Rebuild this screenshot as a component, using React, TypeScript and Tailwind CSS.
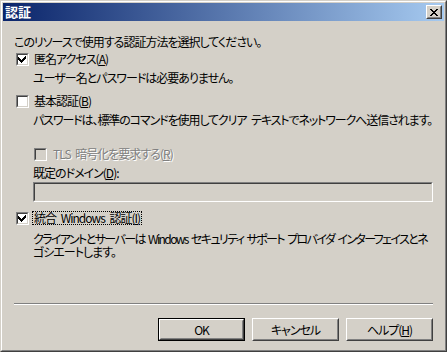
import React from "react";

const F = "font-['Noto_Sans_CJK_JP',sans-serif] [font-feature-settings:'palt'] text-[12px] text-black tracking-[-1px] [word-spacing:3px]";

function Check({ checked = false, disabled = false }: { checked?: boolean; disabled?: boolean }) {
  return (
    <span className="block w-[13px] h-[13px] shrink-0 border border-t-[#808080] border-l-[#808080] border-b-white border-r-white">
      <span
        className={
          disabled
            ? "block w-[11px] h-[11px] border border-t-[#404040] border-l-[#404040] border-b-[#d4d0c8] border-r-[#d4d0c8] bg-[#d4d0c8]"
            : "block w-[11px] h-[11px] border border-t-[#404040] border-l-[#404040] border-b-[#d4d0c8] border-r-[#d4d0c8] bg-white"
        }
      >
        {checked && (
          <svg width="9" height="9" viewBox="0 0 9 9" shapeRendering="crispEdges" className="block">
            <path
              d="M7 1h1v3h-1v1h-1v1h-1v1h-1v1h-1v-1h-1v-1h-1v-1h-1v-3h1v1h1v1h1v1h1v-1h1v-1h1z"
              fill="#000"
            />
          </svg>
        )}
      </span>
    </span>
  );
}

function Btn({ children, def = false }: { children: React.ReactNode; def?: boolean }) {
  const inner = (
    <div className="flex-1 flex border border-t-white border-l-white border-b-[#404040] border-r-[#404040]">
      <div className="flex-1 flex items-center justify-center border border-t-[#d4d0c8] border-l-[#d4d0c8] border-b-[#808080] border-r-[#808080] leading-[14px]">
        {children}
      </div>
    </div>
  );
  return def ? (
    <div className="w-[87px] h-[23px] flex border border-black">{inner}</div>
  ) : (
    <div className="w-[87px] h-[23px] flex">{inner}</div>
  );
}

export default function App() {
  return (
    <div className={`${F} w-[447px] h-[352px] overflow-hidden bg-[#d4d0c8] flex border border-t-[#d4d0c8] border-l-[#d4d0c8] border-b-[#404040] border-r-[#404040]`}>
      <div className="flex-1 min-w-0 flex flex-col border border-t-white border-l-white border-b-[#808080] border-r-[#808080] p-[1px]">
        {/* title bar */}
        <div className="h-[18px] flex items-center justify-between bg-[linear-gradient(to_right,#0a246a,#a6caf0)] pl-[2px] pr-[2px]">
          <span className="text-white font-bold text-[13px] leading-[14px] tracking-[0px]">認証</span>
          <div className="w-[16px] h-[14px] flex border border-t-white border-l-white border-b-[#404040] border-r-[#404040] bg-[#d4d0c8]">
            <div className="flex-1 flex items-center justify-center border border-t-[#d4d0c8] border-l-[#d4d0c8] border-b-[#808080] border-r-[#808080]">
              <svg width="8" height="7" viewBox="0 0 8 7" shapeRendering="crispEdges">
                <path
                  d="M0 0h2v1h1v1h2v-1h1v-1h2v1h-1v1h-1v1h-1v1h1v1h1v1h1v1h-2v-1h-1v-1h-2v1h-1v1h-2v-1h1v-1h1v-1h1v-1h-1v-1h-1v-1h-1z"
                  fill="#000"
                />
              </svg>
            </div>
          </div>
        </div>

        {/* content */}
        <div className="flex-1 min-w-0 flex flex-col pl-[11px] pr-[11px] pt-[14px]">
          <div className="leading-[14px] h-[14px] whitespace-nowrap">
            このリソースで使用する認証方法を選択してください。
          </div>

          <div className="mt-[3px] h-[14px] flex items-center pl-[2px] gap-[5px]">
            <Check checked />
            <span className="leading-[14px] whitespace-nowrap">
              匿名アクセス(<span className="underline">A</span>)
            </span>
          </div>
          <div className="mt-[5px] h-[14px] leading-[14px] pl-[19px] whitespace-nowrap">
            ユーザー名とパスワードは必要ありません。
          </div>

          <div className="mt-[9px] h-[14px] flex items-center pl-[2px] gap-[5px]">
            <Check />
            <span className="leading-[14px] whitespace-nowrap">
              基本認証(<span className="underline">B</span>)
            </span>
          </div>
          <div className="mt-[5px] h-[14px] leading-[14px] pl-[19px] whitespace-nowrap tracking-[-1.1px]">
            パスワードは、標準のコマンドを使用してクリア テキストでネットワークへ送信されます。
          </div>

          <div className="mt-[20px] h-[14px] flex items-center pl-[20px] gap-[6px]">
            <Check disabled />
            <span className="leading-[14px] whitespace-nowrap text-[#808080] [text-shadow:1px_1px_0_#ffffff]">
              TLS 暗号化を要求する(<span className="underline">R</span>)
            </span>
          </div>
          <div className="mt-[5px] h-[14px] leading-[14px] pl-[19px] whitespace-nowrap">
            既定のドメイン(<span className="underline">D</span>):
          </div>
          <div className="mt-[2px] ml-[19px] h-[20px] flex border border-t-[#808080] border-l-[#808080] border-b-white border-r-white">
            <div className="flex-1 border border-t-[#404040] border-l-[#404040] border-b-[#d4d0c8] border-r-[#d4d0c8] bg-[#d4d0c8]" />
          </div>

          <div className="mt-[9px] h-[14px] flex items-center pl-[2px] gap-[3px]">
            <Check checked />
            <span className="leading-[12px] whitespace-nowrap border border-dotted border-black px-[1px]">
              統合 Windows 認証(<span className="underline">I</span>)
            </span>
          </div>
          <div className="mt-[7px] leading-[13px] pl-[19px] whitespace-nowrap">
            <div className="tracking-[-1.6px] [word-spacing:2px]">
              クライアントとサーバーは Windows セキュリティ サポート プロバイダ インターフェイスとネ
            </div>
            <div>ゴシエートします。</div>
          </div>

          <div className="mt-[45px] h-[2px] border-t border-t-[#808080] border-b border-b-white" />

          <div className="mt-[13px] flex justify-end gap-[7px]">
            <Btn def>OK</Btn>
            <Btn>キャンセル</Btn>
            <Btn>
              <span>
                ヘルプ(<span className="underline">H</span>)
              </span>
            </Btn>
          </div>
        </div>
      </div>
    </div>
  );
}
